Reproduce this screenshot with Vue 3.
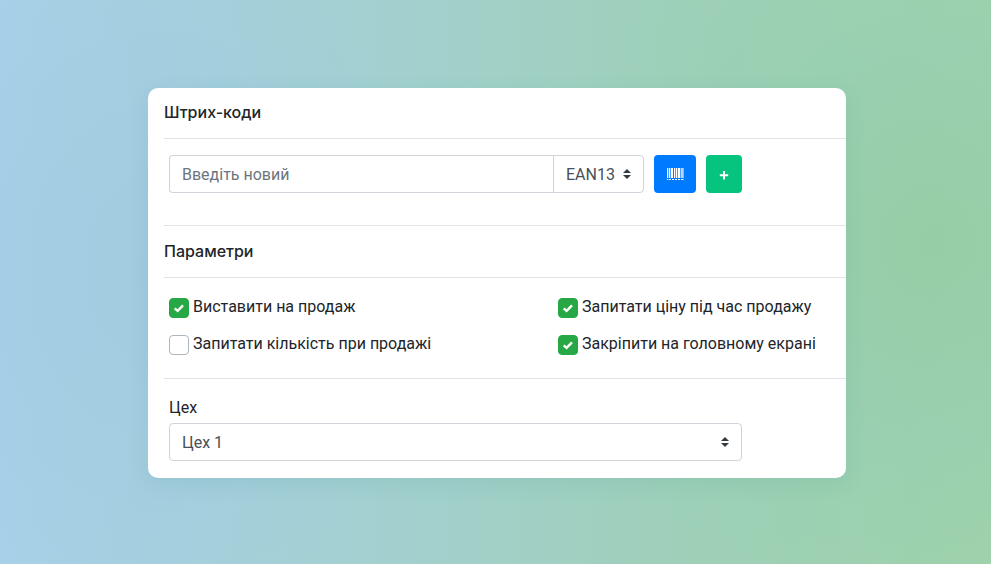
<script setup>
import { ref } from 'vue'

const code = ref('')
const format = ref('EAN13')
const workshop = ref('Цех 1')
const options = ref([
  { id: 'for-sale', label: 'Виставити на продаж', checked: true },
  { id: 'ask-price', label: 'Запитати ціну під час продажу', checked: true },
  { id: 'ask-amount', label: 'Запитати кількість при продажі', checked: false },
  { id: 'pin-home', label: 'Закріпити на головному екрані', checked: true },
])
</script>

<template>
  <main class="page">
    <form class="card" @submit.prevent>
      <section class="section">
        <h2 class="title">Штрих-коди</h2>
        <div class="codes">
          <div class="group">
            <input v-model="code" class="control code" type="text" placeholder="Введіть новий" aria-label="Штрих-код" />
            <div class="picker format">
              <select v-model="format" class="control" aria-label="Формат">
                <option>EAN13</option>
              </select>
              <svg class="arrows" viewBox="0 0 8 10" aria-hidden="true"><path d="M4 0 8 4H0zM0 6h8L4 10z" /></svg>
            </div>
          </div>
          <button class="btn scan" type="button" aria-label="Згенерувати">
            <svg width="18" height="14" viewBox="0 0 18 14" fill="#fff" aria-hidden="true">
              <path d="M1 1h1.300v10H1zM3 1h1.300v10H3zM5 1h2v10H5zM8 1h1.300v10H8zM10 1h1.300v10H10zM12 1h2v10h-2zM14.700 1h1v10h-1zM16.300 1h1.200v10h-1.200zM1 12h1.300v1H1zM3 12h2v1H3zM6 12h2v1H6zM9 12h2v1H9zM12 12h2v1h-2zM15 12h2.500v1H15z" />
            </svg>
          </button>
          <button class="btn add" type="button" aria-label="Додати">
            <svg width="10" height="12" viewBox="0 0 10 12" fill="none" stroke="#fff" stroke-width="2" aria-hidden="true">
              <path d="M5 3v8.500M.8 7.200h8.400" />
            </svg>
          </button>
        </div>
      </section>

      <section class="section">
        <h2 class="title">Параметри</h2>
        <div class="options">
          <div v-for="o in options" :key="o.id" class="option">
            <span class="check">
              <input :id="o.id" v-model="o.checked" type="checkbox" />
              <svg v-if="o.checked" viewBox="0 0 20 20" fill="none" stroke="#fff" stroke-width="2.400" aria-hidden="true">
                <path d="M5.700 10.300 8.600 12.800 14 7.300" />
              </svg>
            </span>
            <label :for="o.id">{{ o.label }}</label>
          </div>
        </div>
      </section>

      <section class="section workshop">
        <label for="workshop">Цех</label>
        <div class="picker">
          <select id="workshop" v-model="workshop" class="control">
            <option>Цех 1</option>
          </select>
          <svg class="arrows" viewBox="0 0 8 10" aria-hidden="true"><path d="M4 0 8 4H0zM0 6h8L4 10z" /></svg>
        </div>
      </section>
    </form>
  </main>
</template>

<style>
body {
  margin: 0;
}
</style>

<style scoped>
.page {
  box-sizing: border-box;
  min-height: 100vh;
  padding: 88px 145px 86px 148px;
  background:
    radial-gradient(ellipse 36% 70% at 94% 43%, rgba(150, 204, 165, 0.9), rgba(150, 206, 178, 0.6) 50%, rgba(150, 206, 178, 0)),
    radial-gradient(ellipse 28% 62% at 16% 48%, rgba(160, 202, 224, 0.8), rgba(160, 202, 224, 0)),
    linear-gradient(90deg, #a8d0e9, #a2d0cd 42%, #9ed0b8 70%, #a0d3a9);
  color: #212529;
  font: 400 16px/24px Roboto, "Liberation Sans", sans-serif;
}

.card {
  padding-left: 16px;
  border-radius: 10px;
  background: #fff;
  box-shadow: 0 6px 20px rgba(60, 130, 130, 0.12);
}

.section + .section {
  border-top: 1px solid #e1e3e5;
}

.title {
  margin: 0;
  padding: 14px 0;
  border-bottom: 1px solid #e1e3e5;
  font-family: Inter, "Liberation Sans", sans-serif;
  font-size: 16px;
  font-weight: 500;
  line-height: 23px;
}

.section:first-child .title {
  padding-top: 13px;
}

.codes {
  display: flex;
  gap: 10px;
  padding: 16px 104px 32px 5px;
}

.group {
  display: flex;
  flex: 1;
}

.control {
  box-sizing: border-box;
  width: 100%;
  height: 38px;
  margin: 0;
  padding: 6px 12px;
  border: 1px solid #ced4da;
  border-radius: 4px;
  background: #fff;
  color: #495057;
  font: inherit;
  appearance: none;
}

select.control {
  padding: 7px 12px 5px;
}

.control::placeholder {
  color: #6c757d;
  opacity: 1;
}

.code {
  flex: 1;
  min-width: 0;
  border-right: 0;
  border-radius: 4px 0 0 4px;
}

.picker {
  display: grid;
  align-items: center;
}

.picker > * {
  grid-area: 1 / 1;
}

.format {
  flex: none;
  width: 91px;
}

.format .control {
  border-radius: 0 4px 4px 0;
}

.arrows {
  width: 8px;
  height: 10px;
  margin-right: 13px;
  justify-self: end;
  fill: #343a40;
  pointer-events: none;
}

.btn {
  display: flex;
  align-items: center;
  justify-content: center;
  height: 38px;
  padding: 0;
  border: 0;
  border-radius: 4px;
}

.scan {
  width: 42px;
  background: #007bff;
}

.add {
  width: 36px;
  background: #06c37e;
}

.options {
  display: grid;
  grid-template-columns: 389fr 288fr;
  gap: 13px 0;
  padding: 17px 0 22px 5px;
}

.option {
  display: flex;
  align-items: flex-start;
  gap: 4px;
  white-space: nowrap;
}

.check {
  display: grid;
  width: 20px;
  height: 20px;
  margin-top: 3px;
}

.check > * {
  grid-area: 1 / 1;
}

.check input {
  width: 20px;
  height: 20px;
  margin: 0;
  border: 1px solid #adb5bd;
  border-radius: 4px;
  background: #fff;
  appearance: none;
}

.check input:checked {
  border-color: #28a745;
  background: #28a745;
}

.check svg {
  pointer-events: none;
}

.workshop {
  padding: 17px 104px 17px 5px;
}

.workshop label {
  display: block;
  margin-bottom: 3px;
}
</style>
